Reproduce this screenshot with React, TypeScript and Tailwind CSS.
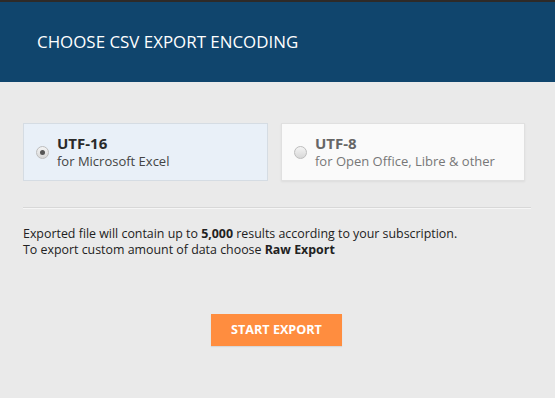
import { useState } from 'react'

const options = [
  { id: 'utf16', label: 'UTF-16', hint: 'for Microsoft Excel' },
  { id: 'utf8', label: 'UTF-8', hint: 'for Open Office, Libre & other' },
]

export default function App() {
  const [encoding, setEncoding] = useState('utf16')

  return (
    <div className="flex h-[398px] w-[555px] flex-col bg-[#eaeaea] font-['Open_Sans',sans-serif]">
      <div className="h-[2px] bg-[#2e2a28]" />
      <div className="flex h-[80px] items-center bg-[#10456d] pb-[1px] pl-[37px]">
        <h1 className="text-[16.9px] text-white">CHOOSE CSV EXPORT ENCODING</h1>
      </div>

      <div className="flex flex-col px-[23px] pt-[41px]">
        <div className="flex gap-[13px]">
          {options.map((o) => {
            const active = encoding === o.id
            return (
              <button
                key={o.id}
                onClick={() => setEncoding(o.id)}
                className={
                  active
                    ? 'flex h-[58px] w-[245px] items-center gap-[8px] border border-[#d5dce3] bg-[#e9f0f8] pl-[12px] text-left'
                    : 'flex h-[58px] w-[244px] items-center gap-[8px] border border-[#e0e0e0] bg-[#fafafa] pl-[12px] text-left shadow-[0_1px_2px_rgba(0,0,0,0.06)]'
                }
              >
                <span className="flex h-[13px] w-[13px] items-center justify-center rounded-full border border-[#bdbdbd] bg-gradient-to-b from-[#f4f4f4] to-[#d8d8d8]">
                  {active ? <span className="h-[5px] w-[5px] rounded-full bg-[#555]" /> : null}
                </span>
                <span className="flex flex-col">
                  <span
                    className={
                      active
                        ? 'text-[15px] font-bold leading-[19px] text-[#2a2a2a]'
                        : 'text-[15px] font-bold leading-[19px] text-[#666]'
                    }
                  >
                    {o.label}
                  </span>
                  <span
                    className={
                      active
                        ? 'text-[13px] leading-[17px] text-[#444]'
                        : 'text-[13px] leading-[17px] text-[#777]'
                    }
                  >
                    {o.hint}
                  </span>
                </span>
              </button>
            )
          })}
        </div>

        <div className="mt-[26px] h-[1px] w-[508px] bg-[#d8d8d8] shadow-[0_1px_0_#f6f6f6]" />

        <div className="mt-[18px] text-[12.4px] leading-[16px] text-[#222]">
          <p>
            Exported file will contain up to <b>5,000</b> results according to your subscription.
          </p>
          <p>
            To export custom amount of data choose <b>Raw Export</b>
          </p>
        </div>

        <div className="mt-[56px] flex justify-center pr-[2px]">
          <button className="h-[32px] w-[131px] bg-[#ff8d3f] text-[12.6px] font-bold text-white shadow-[0_1px_1px_rgba(0,0,0,0.08)]">
            START EXPORT
          </button>
        </div>
      </div>
    </div>
  )
}
